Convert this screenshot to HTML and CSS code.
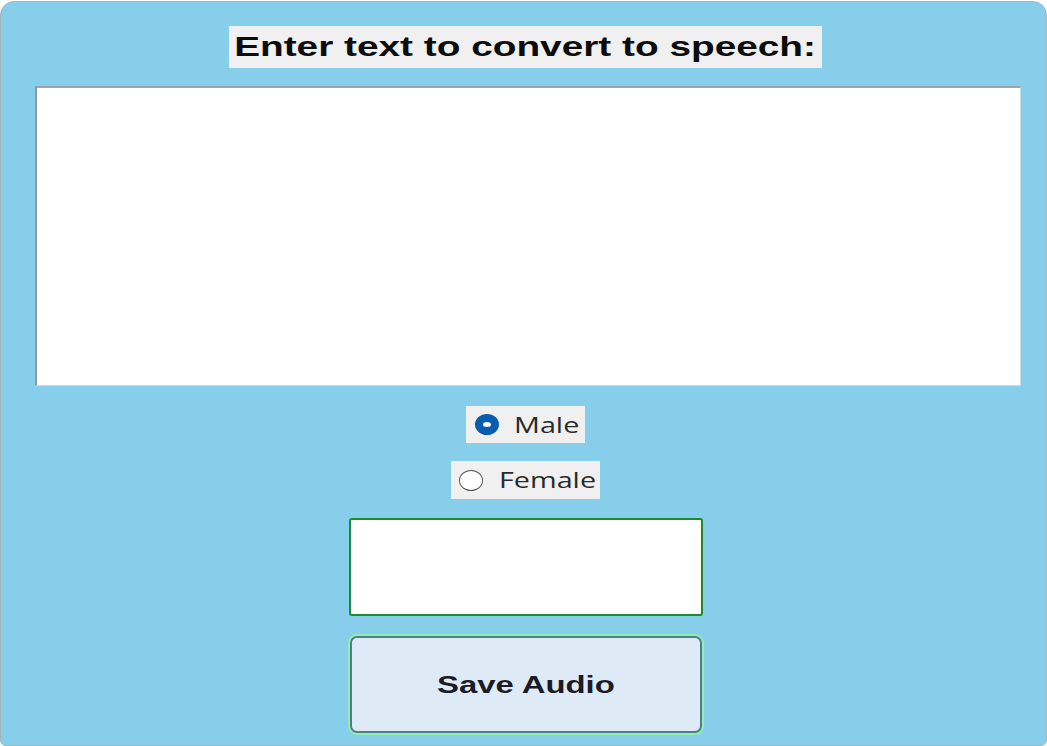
FILE: index.html
```html
<!DOCTYPE html>
<html>
<head>
<meta charset="utf-8">
<link rel="stylesheet" href="styles.css">
</head>
<body>
<div class="panel">
  <div class="title"><span class="wide">Enter text to convert to speech:</span></div>
  <textarea class="input"></textarea>
  <label class="radio radio-male"><span class="dot dot-on"></span><span class="wide rtext">Male</span></label>
  <label class="radio radio-female"><span class="dot"></span><span class="wide rtext">Female</span></label>
  <div class="player"></div>
  <button class="save"><span class="wide">Save Audio</span></button>
</div>
</body>
</html>
```
FILE: styles.css
```css
html, body { margin: 0; padding: 0; background: #ffffff; }
body { width: 1047px; height: 746px; overflow: hidden; }
.panel {
  box-sizing: border-box;
  margin-top: 1px;
  width: 1047px;
  height: 745px;
  background: #87ceeb;
  border: 1px solid #a3b6bf;
  border-radius: 14px 14px 6px 6px;
  display: flex;
  flex-direction: column;
  align-items: center;
  padding-top: 24px;
  padding-left: 4px;
}
.wide {
  display: inline-block;
  transform: scaleX(1.37);
  transform-origin: center;
  white-space: nowrap;
}
.title {
  width: 593px;
  height: 42px;
  background: #f0f0f0;
  font-family: "Liberation Sans", Arial, sans-serif;
  font-weight: bold;
  font-size: 28px;
  line-height: 42px;
  text-align: center;
  color: #0c0c0c;
}
.title .wide { transform: scaleX(1.385); }
.input {
  box-sizing: border-box;
  margin-top: 18px;
  margin-left: 4px;
  width: 986px;
  height: 300px;
  background: #ffffff;
  border-style: solid;
  border-width: 2px 1px 1px 2px;
  border-color: #9aa4a8 #c8dde6 #c8dde6 #8f9a9e;
  resize: none;
  outline: none;
  padding: 4px;
}
.radio {
  box-sizing: border-box;
  background: #f0f0f0;
  display: flex;
  align-items: center;
  font-family: "Open Sans", "Noto Sans", sans-serif;
  font-size: 21px;
  color: #2a2a2a;
}
.radio-male { margin-top: 20px; width: 119px; height: 37px; padding-left: 9px; }
.radio-female { margin-top: 18px; width: 149px; height: 38px; padding-left: 8px; }
.dot {
  box-sizing: border-box;
  width: 24px;
  height: 21px;
  border-radius: 50%;
  border: 1.5px solid #555555;
  background: #ffffff;
  flex: none;
}
.dot-on {
  border: 8px solid #0a5cb0;
  background: #ffffff;
}
.rtext { transform-origin: left center; }
.radio-male .rtext { margin-left: 15px; }
.radio-female .rtext { margin-left: 16px; }
.player {
  box-sizing: border-box;
  margin-top: 19px;
  width: 354px;
  height: 98px;
  background: #ffffff;
  border: 2px solid #1e8a2c;
  border-radius: 3px;
}
.save {
  box-sizing: border-box;
  margin-top: 20px;
  width: 352px;
  height: 97px;
  background: #deebf7;
  border: 2px solid #4f7f8c;
  border-radius: 7px;
  box-shadow: 0 0 0 2px #8ff0b0;
  font-family: "Liberation Sans", Arial, sans-serif;
  font-weight: bold;
  font-size: 24px;
  color: #1c1c28;
  padding: 0;
}
```
